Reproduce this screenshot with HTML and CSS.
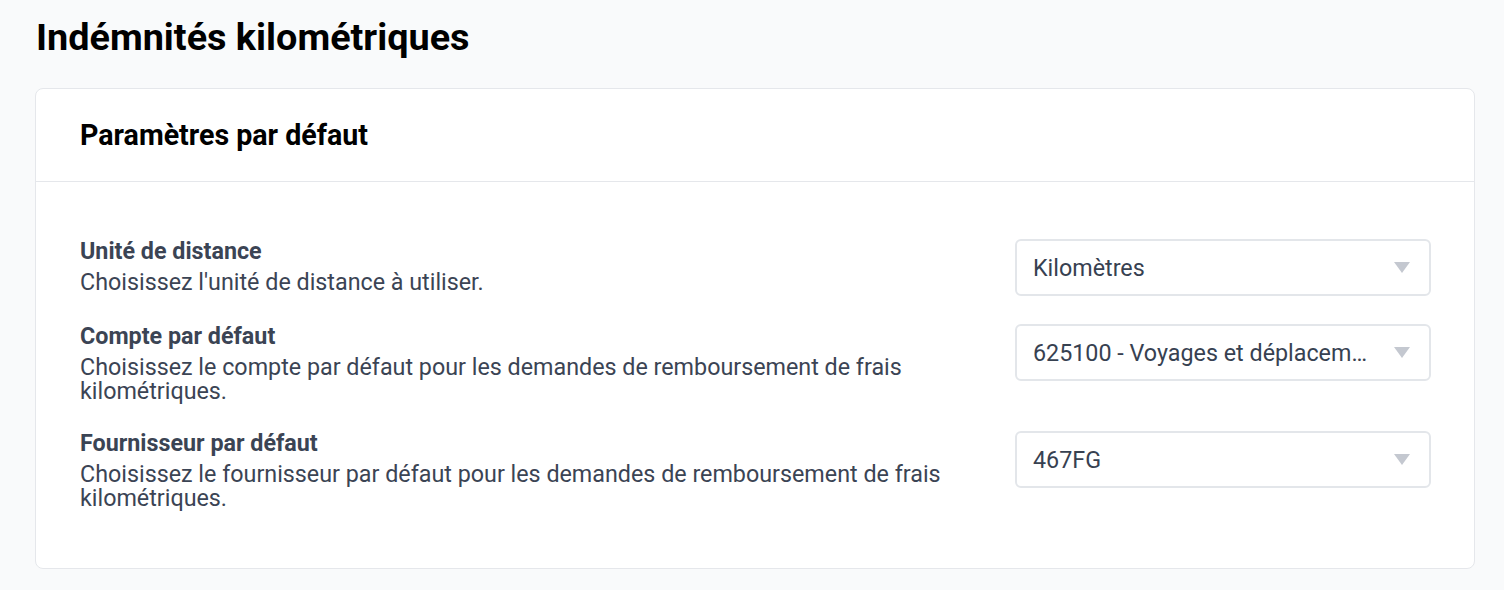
FILE: index.html
```html
<!DOCTYPE html>
<html>
<head>
    <title>Indémnités kilométriques</title>
    <link rel="stylesheet" href="styles.css">
</head>
<body>
    <div class="page">
        <h1>Indémnités kilométriques</h1>

        <div class="card">
            <div class="card-header">
                <h2>Paramètres par défaut</h2>
            </div>

            <div class="card-body">
                <!-- Unité -->
                <div class="setting">
                    <div class="setting-text">
                        <div class="setting-label">Unité de distance</div>
                        <div class="setting-desc">Choisissez l'unité de distance à utiliser.</div>
                    </div>
                    <div class="select">
                        <span class="select-value">Kilomètres</span>
                        <svg class="select-arrow" width="16" height="11" viewBox="0 0 16 11"><path d="M0 0 H16 L8 11 Z" fill="#c4c8d0"/></svg>
                    </div>
                </div>

                <!-- Compte -->
                <div class="setting">
                    <div class="setting-text">
                        <div class="setting-label">Compte par défaut</div>
                        <div class="setting-desc">Choisissez le compte par défaut pour les demandes de remboursement de frais kilométriques.</div>
                    </div>
                    <div class="select">
                        <span class="select-value" title="625100 - Voyages et déplacements">625100 - Voyages et déplacem…</span>
                        <svg class="select-arrow" width="16" height="11" viewBox="0 0 16 11"><path d="M0 0 H16 L8 11 Z" fill="#c4c8d0"/></svg>
                    </div>
                </div>

                <!-- Fournisseur -->
                <div class="setting">
                    <div class="setting-text">
                        <div class="setting-label">Fournisseur par défaut</div>
                        <div class="setting-desc">Choisissez le fournisseur par défaut pour les demandes de remboursement de frais kilométriques.</div>
                    </div>
                    <div class="select">
                        <span class="select-value">467FG</span>
                        <svg class="select-arrow" width="16" height="11" viewBox="0 0 16 11"><path d="M0 0 H16 L8 11 Z" fill="#c4c8d0"/></svg>
                    </div>
                </div>
            </div>
        </div>
    </div>
</body>
</html>
```

FILE: styles.css
```css
/* Page */
body {
    margin: 0;
    background-color: #f9fafb;
    font-family: Roboto, "Liberation Sans", sans-serif;
    color: #111;
}
.page {
    padding: 15px 29px 0 35px;
}
h1 {
    margin: 0 0 29px 1px;
    font-size: 37.8px;
    line-height: 44px;
    font-weight: 700;
    color: #000;
}

/* Carte */
.card {
    background-color: #fff;
    border: 1px solid #e5e7eb;
    border-radius: 8px;
}
.card-header {
    height: 92px;
    display: flex;
    align-items: center;
    padding: 0 44px;
    border-bottom: 1px solid #e5e7eb;
}
h2 {
    margin: 0;
    font-size: 28.6px;
    line-height: 32px;
    font-weight: 700;
    color: #000;
}
.card-body {
    padding: 55px 43px 58px 44px;
    display: flex;
    flex-direction: column;
    gap: 26px;
}

/* Lignes de paramètres */
.setting {
    display: flex;
    align-items: flex-start;
    gap: 40px;
}
.setting-text {
    flex: 1;
    color: #3b4454;
}
.setting-label {
    font-size: 23.3px;
    line-height: 28px;
    font-weight: 700;
    margin-bottom: 6px;
}
.setting-desc {
    font-size: 23.3px;
    line-height: 23.5px;
}

/* Listes déroulantes */
.select {
    flex: none;
    width: 416px;
    box-sizing: border-box;
    height: 57px;
    margin-top: 2px;
    border: 2px solid #e3e6ea;
    border-radius: 6px;
    display: flex;
    align-items: center;
    padding: 0 19px 0 16px;
    gap: 16px;
    background-color: #fff;
}
.select-value {
    flex: 1;
    min-width: 0;
    font-size: 23.3px;
    color: #374151;
    white-space: nowrap;
}
.select-arrow {
    flex: none;
}
```
